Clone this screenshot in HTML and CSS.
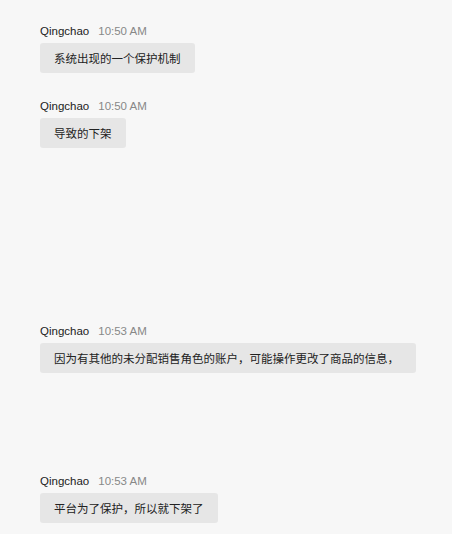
FILE: index.html
```html
<!DOCTYPE html>
<html>
<head>
<meta charset="utf-8">
<link rel="stylesheet" href="styles.css">
</head>
<body>
<div class="chat">
  <div class="msg">
    <div class="head"><span class="name">Qingchao</span><span class="time">10:50 AM</span></div>
    <div class="bubble">系统出现的一个保护机制</div>
  </div>
  <div class="msg">
    <div class="head"><span class="name">Qingchao</span><span class="time">10:50 AM</span></div>
    <div class="bubble">导致的下架</div>
  </div>
  <div class="msg gap2">
    <div class="head"><span class="name">Qingchao</span><span class="time">10:53 AM</span></div>
    <div class="bubble wide">因为有其他的未分配销售角色的账户，可能操作更改了商品的信息，</div>
  </div>
  <div class="msg gap1">
    <div class="head"><span class="name">Qingchao</span><span class="time">10:53 AM</span></div>
    <div class="bubble">平台为了保护，所以就下架了</div>
  </div>
</div>
</body>
</html>
```
FILE: styles.css
```css
html, body {
  margin: 0;
  padding: 0;
  background: #f7f7f7;
}
body {
  font-family: "Liberation Sans", Arial, "Noto Sans CJK SC", sans-serif;
  font-size: 11.5px;
}
.chat {
  padding: 23px 0 0 40px;
  display: flex;
  flex-direction: column;
  align-items: flex-start;
  gap: 25px;
}
.msg {
  display: flex;
  flex-direction: column;
  align-items: flex-start;
}
.gap2 { margin-top: 150px; }
.gap1 { margin-top: 75px; }
.head {
  line-height: 16px;
  height: 16px;
  margin-bottom: 4px;
  display: flex;
  gap: 9px;
}
.name { color: #222; }
.time { color: #888; }
.bubble {
  background: #e6e6e6;
  border-radius: 3px;
  height: 30px;
  line-height: 30px;
  padding: 0 14px;
  color: #222;
  font-family: "Noto Sans CJK SC", sans-serif;
  white-space: nowrap;
}
.bubble.wide { padding-right: 17px; }
```
